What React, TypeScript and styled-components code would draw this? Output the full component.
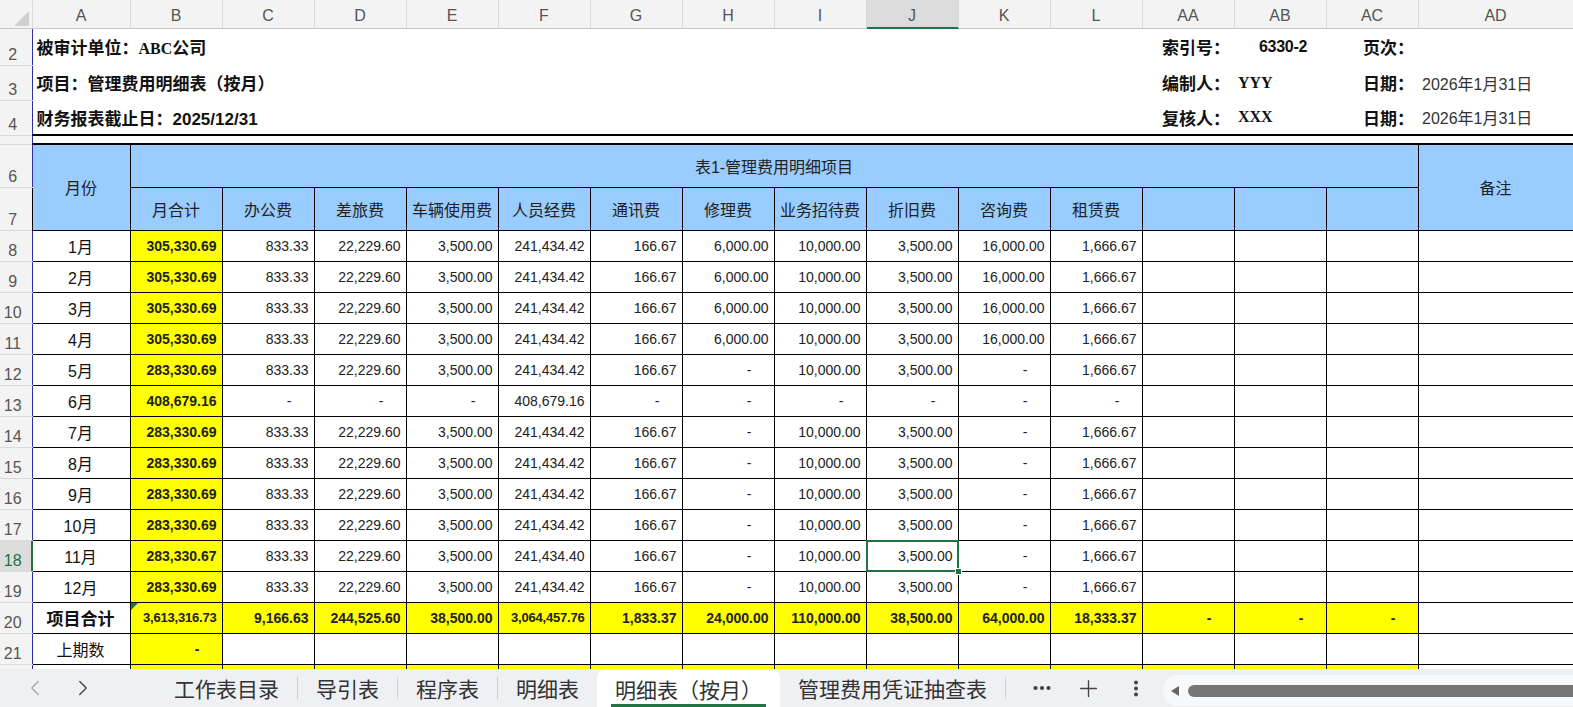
import { ChevronLeft, ChevronRight, Plus } from 'lucide-react';
import { Fragment } from 'react';
import styled, { createGlobalStyle, css } from 'styled-components';

const GREEN = '#217346';
const YELLOW = '#ffff00';
const HEAD_BLUE = '#99ccff';

const GlobalStyle = createGlobalStyle`
  html, body {
    margin: 0;
    padding: 0;
    background: #fff;
  }
  body {
    font-family: "Liberation Sans", "Noto Sans CJK SC", sans-serif;
  }
`;

const Screen = styled.div`
  width: 1573px;
  height: 707px;
  display: flex;
  flex-direction: column;
  overflow: hidden;
  background: #fff;
`;

const SheetViewport = styled.div`
  flex: 1;
  min-height: 0;
  overflow: hidden;
`;

const Grid = styled.table`
  width: 1573px;
  border-collapse: collapse;
  table-layout: fixed;
  font-size: 14px;
  color: #222;
`;

const Col = styled.col<{ $w: number }>`
  width: ${(p) => p.$w}px;
`;

const Row = styled.tr<{ $h: number }>`
  height: ${(p) => p.$h}px;
`;

const Corner = styled.th`
  position: relative;
  padding: 0;
  background: #f3f3f3;
  border-right: 1px solid #d9d9d9;
  border-bottom: 1px solid #c8c8c8;

  &::after {
    content: '';
    position: absolute;
    right: 3px;
    bottom: 2px;
    border-style: solid;
    border-width: 0 0 15px 15px;
    border-color: transparent transparent #d0d0d0 transparent;
  }
`;

const ColHead = styled.th<{ $active?: boolean }>`
  padding: 0 0 3px;
  background: ${(p) => (p.$active ? '#dcdcdc' : '#f3f3f3')};
  color: #555;
  font-size: 16px;
  font-weight: 400;
  line-height: 18px;
  text-align: center;
  vertical-align: bottom;
  border-right: 1px solid #d9d9d9;
  border-bottom: 1px solid ${(p) => (p.$active ? GREEN : '#c8c8c8')};
  box-shadow: ${(p) => (p.$active ? `inset 0 -1px 0 ${GREEN}` : 'none')};
`;

const RowHead = styled.th<{ $active?: boolean }>`
  padding: 0 6px 1px 0;
  background: ${(p) => (p.$active ? '#dcdcdc' : '#f3f3f3')};
  color: ${(p) => (p.$active ? GREEN : '#555')};
  font-size: 16px;
  font-weight: 400;
  line-height: 18px;
  text-align: center;
  vertical-align: bottom;
  border-bottom: 1px solid #dadada;
  border-right: 1px solid ${(p) => (p.$active ? GREEN : '#2e2ea6')};
  box-shadow: ${(p) => (p.$active ? `inset -1px 0 0 ${GREEN}` : 'none')};
`;

type Align = 'left' | 'center' | 'right';

const InfoCell = styled.td<{ $align?: Align; $ruled?: boolean }>`
  padding: 0 4px;
  font-size: 17px;
  font-weight: 700;
  color: #111;
  text-align: ${(p) => p.$align ?? 'left'};
  white-space: nowrap;
  overflow: hidden;
  border-bottom: ${(p) => (p.$ruled ? '2px solid #000' : 'none')};
`;

const SerifBold = styled.span`
  font-family: "Liberation Serif", "Noto Sans CJK SC", serif;
  font-size: 16px;
  font-weight: 700;
`;

const IndexCode = styled.span`
  display: inline-block;
  padding-left: 6px;
  font-size: 16px;
  font-weight: 700;
  letter-spacing: -0.3px;
`;

const DateText = styled.span`
  font-size: 16px;
  font-weight: 400;
  color: #333;
`;

const HeadCell = styled.td<{ $ruled?: boolean }>`
  padding: 0 2px;
  background: ${HEAD_BLUE};
  border: 1px solid #000;
  border-top: ${(p) => (p.$ruled ? '2px solid #000' : '1px solid #000')};
  font-size: 16px;
  color: #222;
  text-align: center;
  white-space: nowrap;
  overflow: hidden;
`;

const DataCell = styled.td<{
  $align?: Align;
  $fill?: boolean;
  $bold?: boolean;
  $compact?: boolean;
  $dash?: boolean;
  $selected?: boolean;
  $flag?: boolean;
}>`
  position: relative;
  padding: 0 ${(p) => (p.$dash ? 22 : 5)}px 0 4px;
  background: ${(p) => (p.$fill ? YELLOW : '#fff')};
  border: 1px solid #000;
  font-size: ${(p) => (p.$compact ? 13 : 14)}px;
  font-weight: ${(p) => (p.$bold ? 700 : 400)};
  letter-spacing: ${(p) => (p.$compact ? '-0.2px' : 'normal')};
  text-align: ${(p) => p.$align ?? 'right'};
  white-space: nowrap;

  ${(p) =>
    p.$selected &&
    css`
      &::before {
        content: '';
        position: absolute;
        left: -1px;
        top: -1px;
        right: -1px;
        bottom: -1px;
        border: 2px solid ${GREEN};
        pointer-events: none;
      }
      &::after {
        content: '';
        position: absolute;
        right: -4px;
        bottom: -4px;
        width: 5px;
        height: 5px;
        background: ${GREEN};
        border: 1px solid #fff;
        z-index: 2;
      }
    `}

  ${(p) =>
    p.$flag &&
    css`
      &::before {
        content: '';
        position: absolute;
        left: 0;
        top: 0;
        border-style: solid;
        border-width: 7px 7px 0 0;
        border-color: ${GREEN} transparent transparent transparent;
      }
    `}
`;

const LabelCell = styled(DataCell)`
  font-size: ${(p) => (p.$bold ? 17 : 16)}px;
  color: #111;
`;

const GapCell = styled.td`
  padding: 0;
`;

/* sheet tabs */

const TabBar = styled.div`
  flex: none;
  height: 38px;
  display: flex;
  align-items: stretch;
  background: #eef0f3;
  font-family: "Noto Sans CJK SC", sans-serif;
`;

const NavGroup = styled.div`
  width: 156px;
  box-sizing: border-box;
  padding-left: 11px;
  display: flex;
`;

const IconButton = styled.button<{ $muted?: boolean; $w?: number }>`
  width: ${(p) => p.$w ?? 48}px;
  padding: 0;
  border: 0;
  background: none;
  display: flex;
  align-items: center;
  justify-content: center;
  color: ${(p) => (p.$muted ? '#a8a8a8' : '#444')};
`;

const Tab = styled.div<{ $active?: boolean }>`
  position: relative;
  display: flex;
  align-items: center;
  padding: 0 18px;
  font-size: 21px;
  color: #333;
  white-space: nowrap;

  ${(p) =>
    p.$active &&
    css`
      margin-top: 1px;
      background: #fff;
      border-radius: 8px 8px 0 0;
      &::after {
        content: '';
        position: absolute;
        left: 14px;
        right: 14px;
        bottom: 0;
        height: 3px;
        background: ${GREEN};
      }
    `}
`;

const TabDivider = styled.span`
  align-self: center;
  width: 1px;
  height: 22px;
  background: #cdd0d4;
`;

const Actions = styled.div`
  display: flex;
  margin-left: 12px;
`;

const HScroll = styled.div`
  flex: 1;
  margin: 6px 0 1px 4px;
  padding-left: 8px;
  display: flex;
  align-items: center;
  gap: 9px;
  background: #f8f9fa;
  border-radius: 16px 0 0 16px;
`;

const ScrollArrow = styled.span`
  width: 0;
  height: 0;
  border-top: 5px solid transparent;
  border-bottom: 5px solid transparent;
  border-right: 8px solid #666;
`;

const ScrollThumb = styled.div`
  flex: 1;
  height: 12px;
  background: #767676;
  border-radius: 6px 0 0 6px;
`;

/* data */

const COL_WIDTHS = [32, 98, ...Array<number>(14).fill(92), 155];
const LETTERS = ['A', 'B', 'C', 'D', 'E', 'F', 'G', 'H', 'I', 'J', 'K', 'L', 'AA', 'AB', 'AC', 'AD'];
const ITEMS = ['月合计', '办公费', '差旅费', '车辆使用费', '人员经费', '通讯费', '修理费', '业务招待费', '折旧费', '咨询费', '租赁费', '', '', ''];

const FULL = ['833.33', '22,229.60', '3,500.00', '241,434.42', '166.67', '6,000.00', '10,000.00', '3,500.00', '16,000.00', '1,666.67'];
const REGULAR = ['833.33', '22,229.60', '3,500.00', '241,434.42', '166.67', '-', '10,000.00', '3,500.00', '-', '1,666.67'];
const JUNE = ['-', '-', '-', '408,679.16', '-', '-', '-', '-', '-', '-'];
const NOV = ['833.33', '22,229.60', '3,500.00', '241,434.40', '166.67', '-', '10,000.00', '3,500.00', '-', '1,666.67'];

const MONTHS = [
  { row: 8, label: '1月', total: '305,330.69', items: FULL },
  { row: 9, label: '2月', total: '305,330.69', items: FULL },
  { row: 10, label: '3月', total: '305,330.69', items: FULL },
  { row: 11, label: '4月', total: '305,330.69', items: FULL },
  { row: 12, label: '5月', total: '283,330.69', items: REGULAR },
  { row: 13, label: '6月', total: '408,679.16', items: JUNE },
  { row: 14, label: '7月', total: '283,330.69', items: REGULAR },
  { row: 15, label: '8月', total: '283,330.69', items: REGULAR },
  { row: 16, label: '9月', total: '283,330.69', items: REGULAR },
  { row: 17, label: '10月', total: '283,330.69', items: REGULAR },
  { row: 18, label: '11月', total: '283,330.67', items: NOV },
  { row: 19, label: '12月', total: '283,330.69', items: REGULAR },
];

const TOTALS = [
  '3,613,316.73', '9,166.63', '244,525.60', '38,500.00', '3,064,457.76', '1,833.37', '24,000.00',
  '110,000.00', '38,500.00', '64,000.00', '18,333.37', '-', '-', '-',
];

const SELECTED_ROW = 18;
const SELECTED_ITEM = 7; // column J

const SHEETS = ['工作表目录', '导引表', '程序表', '明细表'];

const DotsIcon = () => (
  <svg width="18" height="6" viewBox="0 0 18 6" fill="#444">
    <circle cx="2.5" cy="3" r="2.1" />
    <circle cx="9" cy="3" r="2.1" />
    <circle cx="15.5" cy="3" r="2.1" />
  </svg>
);

const KebabIcon = () => (
  <svg width="6" height="17" viewBox="0 0 6 17" fill="#444">
    <circle cx="3" cy="2.5" r="2" />
    <circle cx="3" cy="8.5" r="2" />
    <circle cx="3" cy="14.5" r="2" />
  </svg>
);

const App = () => {
  return (
    <>
      <GlobalStyle />
      <Screen>
        <SheetViewport>
          <Grid>
            <colgroup>
              {COL_WIDTHS.map((w, i) => (
                <Col key={i} $w={w} />
              ))}
            </colgroup>
            <tbody>
              <Row $h={28}>
                <Corner />
                {LETTERS.map((l) => (
                  <ColHead key={l} $active={l === 'J'}>
                    {l}
                  </ColHead>
                ))}
              </Row>

              <Row $h={37}>
                <RowHead>2</RowHead>
                <InfoCell colSpan={12}>
                  被审计单位：<SerifBold>ABC</SerifBold>公司
                </InfoCell>
                <InfoCell $align="right">索引号：</InfoCell>
                <InfoCell $align="center">
                  <IndexCode>6330-2</IndexCode>
                </InfoCell>
                <InfoCell $align="right">页次：</InfoCell>
                <InfoCell />
              </Row>

              <Row $h={35}>
                <RowHead>3</RowHead>
                <InfoCell colSpan={12}>项目：管理费用明细表（按月）</InfoCell>
                <InfoCell $align="right">编制人：</InfoCell>
                <InfoCell>
                  <SerifBold>YYY</SerifBold>
                </InfoCell>
                <InfoCell $align="right">日期：</InfoCell>
                <InfoCell>
                  <DateText>2026年1月31日</DateText>
                </InfoCell>
              </Row>

              <Row $h={35}>
                <RowHead>4</RowHead>
                <InfoCell colSpan={12} $ruled>
                  财务报表截止日：2025/12/31
                </InfoCell>
                <InfoCell $align="right" $ruled>
                  复核人：
                </InfoCell>
                <InfoCell $ruled>
                  <SerifBold>XXX</SerifBold>
                </InfoCell>
                <InfoCell $align="right" $ruled>
                  日期：
                </InfoCell>
                <InfoCell $ruled>
                  <DateText>2026年1月31日</DateText>
                </InfoCell>
              </Row>

              <Row $h={9}>
                <RowHead />
                <GapCell colSpan={16} />
              </Row>

              <Row $h={43}>
                <RowHead>6</RowHead>
                <HeadCell rowSpan={2} $ruled>
                  月份
                </HeadCell>
                <HeadCell colSpan={14} $ruled>
                  表1-管理费用明细项目
                </HeadCell>
                <HeadCell rowSpan={2} $ruled>
                  备注
                </HeadCell>
              </Row>

              <Row $h={43}>
                <RowHead>7</RowHead>
                {ITEMS.map((t, i) => (
                  <HeadCell key={i}>{t}</HeadCell>
                ))}
              </Row>

              {MONTHS.map((m) => (
                <Row $h={31} key={m.row}>
                  <RowHead $active={m.row === SELECTED_ROW}>{m.row}</RowHead>
                  <LabelCell $align="center">{m.label}</LabelCell>
                  <DataCell $fill $bold>
                    {m.total}
                  </DataCell>
                  {m.items.map((v, i) => (
                    <DataCell
                      key={i}
                      $dash={v === '-'}
                      $selected={m.row === SELECTED_ROW && i === SELECTED_ITEM}
                    >
                      {v}
                    </DataCell>
                  ))}
                  <DataCell />
                  <DataCell />
                  <DataCell />
                  <DataCell />
                </Row>
              ))}

              <Row $h={31}>
                <RowHead>20</RowHead>
                <LabelCell $align="center" $bold>
                  项目合计
                </LabelCell>
                {TOTALS.map((v, i) => (
                  <DataCell
                    key={i}
                    $fill
                    $bold
                    $dash={v === '-'}
                    $compact={i === 0 || i === 4}
                    $flag={i === 0}
                  >
                    {v}
                  </DataCell>
                ))}
                <DataCell />
              </Row>

              <Row $h={31}>
                <RowHead>21</RowHead>
                <LabelCell $align="center">上期数</LabelCell>
                <DataCell $fill $bold $dash>
                  -
                </DataCell>
                {Array.from({ length: 14 }, (_, i) => (
                  <DataCell key={i} />
                ))}
              </Row>

              {/* row 22: only its top edge shows above the sheet tabs */}
              <Row $h={31}>
                <RowHead />
                <DataCell />
                {Array.from({ length: 14 }, (_, i) => (
                  <DataCell key={i} $fill />
                ))}
                <DataCell />
              </Row>
            </tbody>
          </Grid>
        </SheetViewport>

        <TabBar>
          <NavGroup>
            <IconButton $muted>
              <ChevronLeft size={26} strokeWidth={1.3} />
            </IconButton>
            <IconButton>
              <ChevronRight size={26} strokeWidth={1.3} />
            </IconButton>
          </NavGroup>
          {SHEETS.map((s, i) => (
            <Fragment key={s}>
              {i > 0 && <TabDivider />}
              <Tab>{s}</Tab>
            </Fragment>
          ))}
          <Tab $active>明细表（按月）</Tab>
          <Tab>管理费用凭证抽查表</Tab>
          <TabDivider />
          <Actions>
            <IconButton $w={47}>
              <DotsIcon />
            </IconButton>
            <IconButton $w={47}>
              <Plus size={27} strokeWidth={1.2} />
            </IconButton>
            <IconButton $w={47}>
              <KebabIcon />
            </IconButton>
          </Actions>
          <HScroll>
            <ScrollArrow />
            <ScrollThumb />
          </HScroll>
        </TabBar>
      </Screen>
    </>
  );
};

export default App;
